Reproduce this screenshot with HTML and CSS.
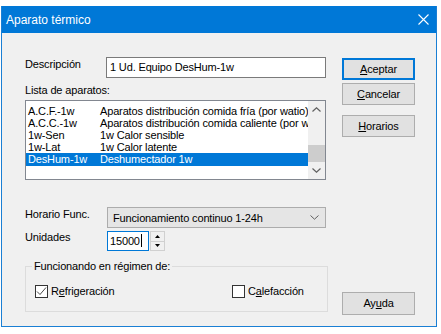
FILE: index.html
```html
<!DOCTYPE html>
<html>
<head>
  <title>Aparato térmico</title>
  <meta charset="utf-8">
  <link rel="stylesheet" href="styles.css">
</head>
<body>
  <div class="window">
    <div class="titlebar">
      <span class="title">Aparato térmico</span>
      <span class="close">
        <svg width="11" height="11" viewBox="0 0 11 11"><path d="M0.5 0.5L10.5 10.5M10.5 0.5L0.5 10.5" stroke="#fff" stroke-width="1.1" fill="none"/></svg>
      </span>
    </div>

    <div class="client">
      <div class="main">
        <div class="row">
          <span class="lbl lbl-desc">Descripción</span>
          <div class="textbox desc">1 Ud. Equipo DesHum-1w</div>
        </div>

        <div class="lbl-list">Lista de aparatos:</div>
        <div class="listbox">
          <div class="items">
            <div class="item"><span class="code">A.C.F.-1w</span><span>Aparatos distribución comida fría (por watio)</span></div>
            <div class="item"><span class="code">A.C.C.-1w</span><span>Aparatos distribución comida caliente (por watio)</span></div>
            <div class="item"><span class="code">1w-Sen</span><span>1w Calor sensible</span></div>
            <div class="item"><span class="code">1w-Lat</span><span>1w Calor latente</span></div>
            <div class="item sel"><span class="code">DesHum-1w</span><span>Deshumectador 1w</span></div>
          </div>
          <div class="vscroll">
            <span class="arrow">
              <svg width="9" height="5" viewBox="0 0 9 5"><path d="M0.5 4.5L4.5 0.8L8.5 4.5" stroke="#606060" stroke-width="1.2" fill="none"/></svg>
            </span>
            <span class="track"><span class="thumb"></span></span>
            <span class="arrow">
              <svg width="9" height="5" viewBox="0 0 9 5"><path d="M0.5 0.5L4.5 4.2L8.5 0.5" stroke="#606060" stroke-width="1.2" fill="none"/></svg>
            </span>
          </div>
        </div>

        <div class="row row-horario">
          <span class="lbl lbl-form">Horario Func.</span>
          <div class="select">
            <span>Funcionamiento continuo 1-24h</span>
            <svg width="9" height="5" viewBox="0 0 9 5"><path d="M0.5 0.5L4.5 4.2L8.5 0.5" stroke="#606060" stroke-width="1" fill="none"/></svg>
          </div>
        </div>

        <div class="row row-unidades">
          <span class="lbl lbl-form lbl-uni">Unidades</span>
          <div class="textbox units">15000<span class="caret"></span></div>
          <div class="spinner">
            <span class="spin-btn"><svg width="5" height="3" viewBox="0 0 5 3"><path d="M0 3L2.5 0L5 3Z" fill="#000"/></svg></span>
            <span class="spin-btn"><svg width="5" height="3" viewBox="0 0 5 3"><path d="M0 0L2.5 3L5 0Z" fill="#000"/></svg></span>
          </div>
        </div>

        <fieldset class="group">
          <legend>Funcionando en régimen de:</legend>
          <div class="checks">
            <label class="check">
              <span class="box">
                <svg width="11" height="11" viewBox="0 0 11 11"><path d="M1 5.5L4 8.5L10 1.5" stroke="#333" stroke-width="0.9" fill="none"/></svg>
              </span>
              <span>R<u>e</u>frigeración</span>
            </label>
            <label class="check">
              <span class="box"></span>
              <span>C<u>a</u>lefacción</span>
            </label>
          </div>
        </fieldset>
      </div>

      <div class="buttons">
        <div class="btn btn-default"><u>A</u>ceptar</div>
        <div class="btn btn-cancel"><u>C</u>ancelar</div>
        <div class="btn btn-horarios"><u>H</u>orarios</div>
        <div class="btn btn-help">Ay<u>u</u>da</div>
      </div>
    </div>
  </div>
</body>
</html>
```

FILE: styles.css
```css
body {
  margin: 0;
  background: #fff;
  font-family: "Liberation Sans", Arial, sans-serif;
  font-size: 11px;
  letter-spacing: -0.15px;
  color: #000;
}

.window {
  margin: 6px 0 0 1px;
  width: 436px;
  height: 321px;
  box-sizing: border-box;
  border: 1px solid #1a7fd4;
  border-top: none;
  background: #f0f0f0;
  display: flex;
  flex-direction: column;
}

.titlebar {
  height: 27px;
  flex: none;
  background: #0078d7;
  color: #fff;
  font-size: 12px;
  letter-spacing: 0;
  display: flex;
  align-items: center;
  justify-content: space-between;
  padding-left: 4px;
}

.close {
  width: 26px;
  display: flex;
  justify-content: center;
}

.client {
  flex: 1;
  display: flex;
  gap: 14px;
  padding: 24px 0 0 23px;
}

.main {
  width: 303px;
  display: flex;
  flex-direction: column;
}

.row {
  display: flex;
  align-items: flex-start;
}

.lbl {
  line-height: 13px;
  padding-top: 1px;
  flex: none;
}

.lbl-desc {
  width: 81px;
}

.lbl-form {
  width: 82px;
}

.lbl-uni {
  padding-top: 0;
}

.textbox {
  height: 21px;
  box-sizing: border-box;
  border: 1px solid #7a7a7a;
  background: #fff;
  padding: 0 3px;
  line-height: 19px;
  white-space: nowrap;
}

.desc {
  width: 220px;
}

.lbl-list {
  margin-top: 6px;
  line-height: 13px;
}

.listbox {
  margin-top: 3px;
  width: 301px;
  height: 80px;
  box-sizing: border-box;
  border: 1px solid #828790;
  background: #fff;
  display: flex;
}

.items {
  flex: 1;
  padding-top: 4px;
  overflow: hidden;
}

.item {
  display: flex;
  height: 12px;
  line-height: 12px;
  white-space: nowrap;
  padding-left: 2px;
}

.item.sel {
  background: #0078d7;
  color: #fff;
  height: 13px;
  line-height: 12px;
}

.code {
  width: 72px;
  flex: none;
}

.vscroll {
  width: 17px;
  flex: none;
  display: flex;
  flex-direction: column;
  background: #f0f0f0;
}

.arrow {
  height: 17px;
  flex: none;
  display: flex;
  align-items: center;
  justify-content: center;
}

.track {
  flex: 1;
  display: flex;
  flex-direction: column;
  justify-content: flex-end;
}

.thumb {
  height: 17px;
  background: #cdcdcd;
}

.row-horario {
  margin-top: 27px;
}

.select {
  width: 219px;
  height: 21px;
  box-sizing: border-box;
  background: #e5e5e5;
  border: 1px solid #acacac;
  display: flex;
  align-items: center;
  justify-content: space-between;
  padding: 0 6px 0 5px;
}

.row-unidades {
  margin-top: 3px;
}

.units {
  width: 42px;
  height: 20px;
  line-height: 18px;
  border-color: #0078d7;
  padding: 0 2px;
}

.caret {
  display: inline-block;
  width: 1px;
  height: 13px;
  background: #000;
  vertical-align: -2px;
  margin-left: 1px;
}

.spinner {
  width: 15px;
  height: 20px;
  margin-left: 1px;
  box-sizing: border-box;
  border: 1px solid #d0d0d0;
  display: flex;
  flex-direction: column;
}

.spin-btn {
  flex: 1;
  display: flex;
  align-items: center;
  justify-content: center;
  background: #f0f0f0;
}

.spin-btn + .spin-btn {
  border-top: 1px solid #d0d0d0;
}

.group {
  margin: 9px 0 0 0;
  padding: 0 6px 0 6px;
  width: 303px;
  height: 52px;
  box-sizing: border-box;
  border: 1px solid #dcdcdc;
  min-width: 0;
}

.group legend {
  padding: 0 2px;
  line-height: 13px;
}

.checks {
  margin-top: 12px;
  display: grid;
  grid-template-columns: 197px auto;
  padding-left: 3px;
}

.check {
  display: flex;
  align-items: center;
  gap: 3px;
  line-height: 13px;
}

.box {
  width: 13px;
  height: 13px;
  box-sizing: border-box;
  border: 1px solid #333;
  background: #fff;
  display: flex;
  align-items: center;
  justify-content: center;
}

.buttons {
  width: 73px;
  display: flex;
  flex-direction: column;
}

.btn {
  height: 22px;
  box-sizing: border-box;
  border: 1px solid #adadad;
  background: #e1e1e1;
  text-align: center;
  line-height: 20px;
}

.btn-default {
  margin-top: 1px;
  border-color: #0078d7;
  box-shadow: inset 0 0 0 1px #0078d7;
}

.btn-cancel {
  margin-top: 3px;
}

.btn-horarios {
  margin-top: 10px;
}

.btn-help {
  margin-top: 155px;
  height: 23px;
  line-height: 21px;
}
```
